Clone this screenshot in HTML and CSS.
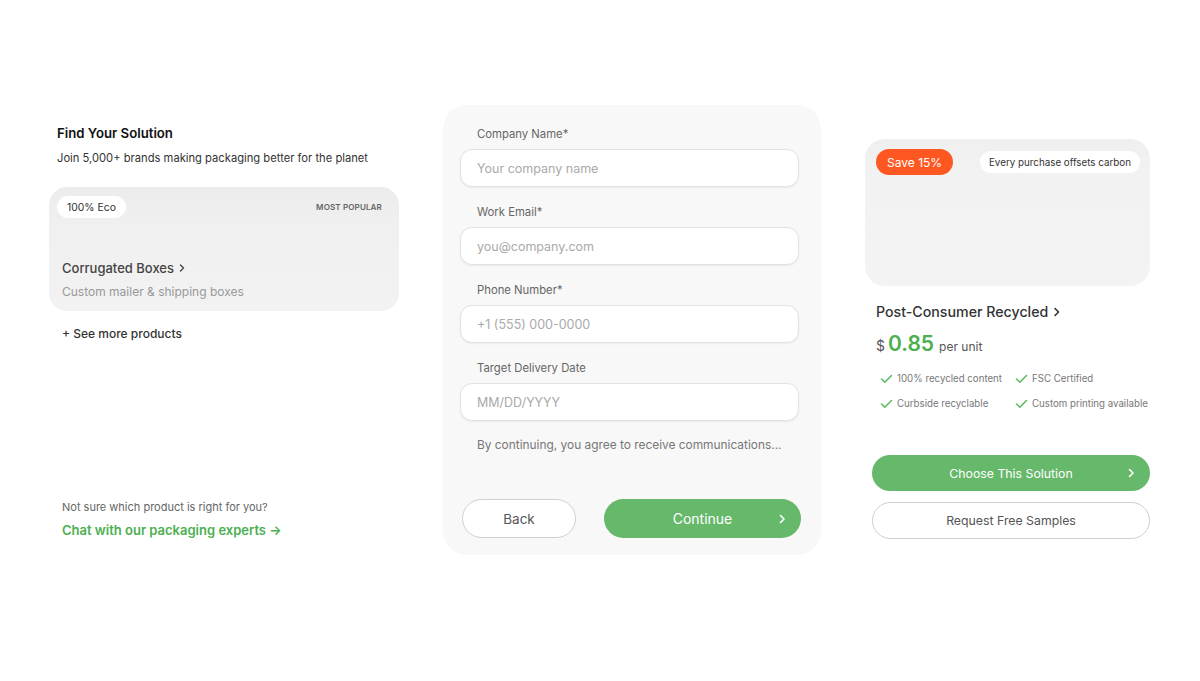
FILE: index.html
```html
<!DOCTYPE html>
<html lang="en">
<head>
<meta charset="utf-8">
<title>Find Your Solution</title>
<link rel="stylesheet" href="styles.css">
</head>
<body>
<main class="page">
  <section class="col-left">
    <h1 class="title">Find Your Solution</h1>
    <p class="subtitle">Join 5,000+ brands making packaging better for the planet</p>
    <div class="product-card">
      <div class="product-top">
        <span class="pill">100% Eco</span>
        <span class="popular">MOST POPULAR</span>
      </div>
      <div class="product-name">Corrugated Boxes
        <svg class="chev" width="8" height="10" viewBox="0 0 8 10"><polyline points="2.5,2 5.5,5 2.5,8" fill="none" stroke="#444" stroke-width="1.4" stroke-linecap="round" stroke-linejoin="round"/></svg>
      </div>
      <div class="product-desc">Custom mailer &amp; shipping boxes</div>
    </div>
    <div class="see-more">+ See more products</div>
    <div class="help">
      <p class="help-q">Not sure which product is right for you?</p>
      <a class="help-link" href="#">Chat with our packaging experts →</a>
    </div>
  </section>

  <section class="form-card">
    <div class="field">
      <label class="label">Company Name*</label>
      <div class="input">Your company name</div>
    </div>
    <div class="field">
      <label class="label">Work Email*</label>
      <div class="input">you@company.com</div>
    </div>
    <div class="field">
      <label class="label">Phone Number*</label>
      <div class="input">+1 (555) 000-0000</div>
    </div>
    <div class="field">
      <label class="label">Target Delivery Date</label>
      <div class="input">MM/DD/YYYY</div>
    </div>
    <p class="disclaimer">By continuing, you agree to receive communications...</p>
    <div class="actions">
      <button class="btn-back">Back</button>
      <button class="btn-continue"><span>Continue</span>
        <svg class="btn-chev" width="10" height="12" viewBox="0 0 10 12"><polyline points="3.5,2.5 7,6 3.5,9.5" fill="none" stroke="#fff" stroke-width="1.6" stroke-linecap="round" stroke-linejoin="round"/></svg>
      </button>
    </div>
  </section>

  <section class="col-right">
    <div class="image-card">
      <span class="save">Save 15%</span>
      <span class="offset">Every purchase offsets carbon</span>
    </div>
    <div class="rec-title">Post-Consumer Recycled
      <svg class="chev" width="9" height="12" viewBox="0 0 9 12"><polyline points="3,2.5 6.5,6 3,9.5" fill="none" stroke="#3a3220" stroke-width="1.6" stroke-linecap="round" stroke-linejoin="round"/></svg>
    </div>
    <div class="price"><span class="cur">$</span><span class="amount">0.85</span><span class="unit">per unit</span></div>
    <ul class="features">
      <li><svg width="13" height="10" viewBox="0 0 13 10"><polyline points="1.5,5 4.8,8.3 11.5,1.5" fill="none" stroke="#5cb860" stroke-width="1.5" stroke-linecap="round" stroke-linejoin="round"/></svg>100% recycled content</li>
      <li><svg width="13" height="10" viewBox="0 0 13 10"><polyline points="1.5,5 4.8,8.3 11.5,1.5" fill="none" stroke="#5cb860" stroke-width="1.5" stroke-linecap="round" stroke-linejoin="round"/></svg>FSC Certified</li>
      <li><svg width="13" height="10" viewBox="0 0 13 10"><polyline points="1.5,5 4.8,8.3 11.5,1.5" fill="none" stroke="#5cb860" stroke-width="1.5" stroke-linecap="round" stroke-linejoin="round"/></svg>Curbside recyclable</li>
      <li><svg width="13" height="10" viewBox="0 0 13 10"><polyline points="1.5,5 4.8,8.3 11.5,1.5" fill="none" stroke="#5cb860" stroke-width="1.5" stroke-linecap="round" stroke-linejoin="round"/></svg>Custom printing available</li>
    </ul>
    <button class="btn-choose"><span>Choose This Solution</span>
      <svg class="btn-chev" width="10" height="12" viewBox="0 0 10 12"><polyline points="3.5,2.5 7,6 3.5,9.5" fill="none" stroke="#fff" stroke-width="1.6" stroke-linecap="round" stroke-linejoin="round"/></svg>
    </button>
    <button class="btn-samples">Request Free Samples</button>
  </section>
</main>
</body>
</html>
```

FILE: styles.css
```css
* { box-sizing: border-box; }
html, body { margin: 0; padding: 0; background: #fff; }
body {
  font-family: Inter, "Noto Sans", "Liberation Sans", sans-serif;
  color: #222;
  width: 1200px;
  height: 681px;
  overflow: hidden;
}
.page {
  display: flex;
  align-items: flex-start;
  padding: 105px 50px 0 49px;
  gap: 44px;
}

/* left */
.col-left {
  width: 350px;
  height: 450px;
  display: flex;
  flex-direction: column;
  padding-top: 19px;
}
.title {
  margin: 0 0 0 8px;
  font-size: 13.2px;
  font-weight: 600;
  line-height: 18px;
  color: #111;
}
.subtitle {
  margin: 8px 0 0 8px;
  font-size: 11.2px;
  line-height: 16px;
  color: #333;
}
.product-card {
  margin-top: 21px;
  height: 124px;
  flex-shrink: 0;
  border-radius: 18px;
  background: linear-gradient(180deg, #ececec 0%, #f0f0f0 35%, #f2f2f2 100%);
  padding: 9px 17px 0 8px;
  display: flex;
  flex-direction: column;
}
.product-top {
  display: flex;
  justify-content: space-between;
  align-items: center;
}
.pill {
  background: #fff;
  border-radius: 12px;
  height: 22px;
  padding: 0 10px;
  display: inline-flex;
  align-items: center;
  font-size: 10.4px;
  color: #333;
}
.popular {
  font-size: 8.1px;
  font-weight: 600;
  color: #666;
  letter-spacing: 0.1px;
}
.product-name {
  margin: 41px 0 0 5px;
  font-size: 13px;
  font-weight: 500;
  color: #444;
  line-height: 18px;
  display: flex;
  align-items: center;
  gap: 2px;
}
.chev { display: inline-block; margin-left: 2px; }
.product-desc {
  margin: 7px 0 0 5px;
  font-size: 12px;
  color: #999;
  line-height: 16px;
}
.see-more {
  margin: 15px 0 0 13px;
  font-size: 12px;
  font-weight: 500;
  color: #333;
  line-height: 16px;
}
.help {
  margin-top: auto;
  padding: 0 0 17px 13px;
}
.help-q {
  margin: 0;
  font-size: 11px;
  color: #666;
  line-height: 15px;
}
.help-link {
  display: block;
  margin-top: 7px;
  font-size: 13px;
  font-weight: 600;
  color: #4caf50;
  text-decoration: none;
  line-height: 16px;
}

/* form */
.form-card {
  width: 378px;
  height: 450px;
  background: #f8f8f8;
  border-radius: 24px;
  padding: 21px 22px 17px 17px;
  display: flex;
  flex-direction: column;
}
.field { display: flex; flex-direction: column; margin-bottom: 17px; }
.label {
  font-size: 11.3px;
  color: #666;
  line-height: 16px;
  padding-left: 17px;
  margin-bottom: 7px;
}
.input {
  height: 38px;
  flex-shrink: 0;
  background: #fff;
  border: 1px solid #e2e2e2;
  border-radius: 12px;
  box-shadow: 0 1px 2px rgba(0,0,0,0.06);
  display: flex;
  align-items: center;
  padding-left: 16px;
  font-size: 12.5px;
  color: #aaa;
}
.disclaimer {
  margin: -1px 0 0 17px;
  font-size: 11.9px;
  color: #777;
  line-height: 16px;
}
.actions {
  margin-top: auto;
  margin-right: -4px;
  display: flex;
  gap: 28px;
  padding-left: 2px;
}
.btn-back, .btn-continue, .btn-choose, .btn-samples {
  font-family: inherit;
  border-radius: 999px;
  cursor: pointer;
  flex-shrink: 0;
}
.btn-back {
  width: 114px;
  height: 39px;
  background: #fff;
  border: 1px solid #cfcfcf;
  font-size: 13.5px;
  color: #555;
}
.btn-continue {
  width: 197px;
  height: 39px;
  background: #66b86a;
  border: none;
  color: #fff;
  font-size: 14px;
  position: relative;
}
.btn-chev {
  position: absolute;
  right: 14px;
  top: 50%;
  transform: translateY(-50%);
}

/* right */
.col-right {
  width: 285px;
  margin-top: 34px;
  display: flex;
  flex-direction: column;
}
.image-card {
  height: 147px;
  border-radius: 20px;
  background: linear-gradient(180deg, #efefef 0%, #f2f2f2 25%, #f3f3f3 100%);
  display: flex;
  justify-content: space-between;
  align-items: flex-start;
  padding: 10px 10px 0 11px;
}
.save {
  background: #ff5722;
  color: #fff;
  font-size: 12px;
  height: 26px;
  padding: 0 11px;
  border-radius: 13px;
  display: inline-flex;
  align-items: center;
}
.offset {
  margin-top: 2px;
  background: #fff;
  font-size: 9.8px;
  color: #333;
  height: 22px;
  padding: 0 9px;
  border-radius: 11px;
  display: inline-flex;
  align-items: center;
}
.rec-title {
  margin: 16px 0 0 11px;
  font-size: 14.2px;
  font-weight: 500;
  color: #333;
  line-height: 20px;
  display: flex;
  align-items: center;
  gap: 2px;
}
.price {
  margin: 10px 0 0 11px;
  display: flex;
  align-items: baseline;
  line-height: 24px;
}
.cur { font-size: 14px; color: #555; margin-right: 3px; }
.amount { font-size: 21px; font-weight: 600; color: #4caf50; margin-right: 5px; }
.unit { font-size: 12px; color: #555; }
.features {
  list-style: none;
  margin: 12px 0 0 15px;
  padding: 0;
  display: grid;
  grid-template-columns: 135px auto;
  row-gap: 9px;
}
.features li {
  font-size: 9.7px;
  color: #777;
  line-height: 16px;
  display: flex;
  align-items: center;
  gap: 4px;
  white-space: nowrap;
}
.btn-choose {
  margin: 43px 0 0 7px;
  height: 36px;
  background: #66b86a;
  border: none;
  color: #fff;
  font-size: 12.3px;
  position: relative;
}
.btn-samples {
  margin: 11px 0 0 7px;
  height: 37px;
  background: #fff;
  border: 1px solid #cfcfcf;
  color: #555;
  font-size: 12.3px;
}
```
